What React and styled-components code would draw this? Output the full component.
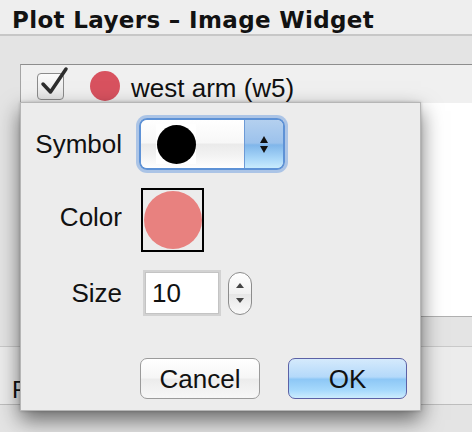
import React from 'react';
import styled, { createGlobalStyle } from 'styled-components';

const GlobalStyle = createGlobalStyle`
  html, body {
    margin: 0;
    padding: 0;
  }
  body {
    width: 472px;
    height: 432px;
    overflow: hidden;
    background: #e4e4e4;
    font-family: "Liberation Sans", Arial, sans-serif;
  }
`;

const Window = styled.div`
  position: relative;
  width: 472px;
  height: 432px;
  overflow: hidden;
  display: flex;
  flex-direction: column;
  background: #e4e4e4;
`;

const TitleBar = styled.div`
  height: 36px;
  box-sizing: border-box;
  padding: 6px 0 0 12px;
  border-bottom: 2px solid #c7c7c7;
  background: #eeeeee;
  font-family: "DejaVu Sans", Verdana, sans-serif;
  font-weight: bold;
  font-size: 23px;
  line-height: 28px;
  letter-spacing: 0.35px;
  color: #121212;
  white-space: nowrap;
`;

const Panel = styled.div`
  padding: 28px 0 29px 20px;
  border-bottom: 1px solid #c9c9c9;
  background: #e4e4e4;
`;

const ListBox = styled.div`
  height: 251px;
  border-top: 1px solid #8d8d8d;
  border-left: 1px solid #a5a5a5;
  border-bottom: 1px solid #b0b0b0;
  background: #ffffff;
`;

const LayerRow = styled.div`
  height: 38px;
  box-sizing: border-box;
  padding: 4px 0 0 16px;
  display: flex;
  align-items: center;
  background: #f0f0f0;
`;

const CheckBox = styled.div`
  position: relative;
  width: 27px;
  height: 27px;
  box-sizing: border-box;
  border: 1.5px solid #8b8b8b;
  border-radius: 4px;
  background: linear-gradient(#fbfbfb, #e4e4e4);

  svg {
    position: absolute;
    left: -1px;
    top: -8px;
    overflow: visible;
  }
`;

const Dot = styled.div`
  width: ${(p) => p.$size}px;
  height: ${(p) => p.$size}px;
  border-radius: 50%;
  background: ${(p) => p.$color};
  flex: none;
`;

const LayerName = styled.span`
  margin-left: 11px;
  padding-top: 3px;
  font-size: 26px;
  line-height: 30px;
  color: #111;
  white-space: nowrap;
`;

const LowerSection = styled.div`
  height: 58px;
  box-sizing: border-box;
  padding: 29px 0 0 12px;
  border-bottom: 1px solid #bdbdbd;
  background: #ececec;
  font-size: 24px;
  line-height: 28px;
  color: #111;
`;

const Dialog = styled.div`
  position: absolute;
  left: 20px;
  top: 102px;
  width: 401px;
  height: 309px;
  box-sizing: border-box;
  padding: 15px 0 0 0;
  border: 1px solid #b6b6b6;
  background: #ececec;
  box-shadow: 0 9px 20px rgba(0, 0, 0, 0.55), 0 0 3px rgba(0, 0, 0, 0.2);
  display: flex;
  flex-direction: column;
`;

const FieldRow = styled.div`
  display: flex;
  align-items: center;
  gap: 19px;
  margin-top: ${(p) => p.$top || 0}px;
`;

const Label = styled.span`
  width: 101px;
  text-align: right;
  font-size: 26px;
  line-height: 30px;
  color: #111;
  margin-bottom: ${(p) => p.$lift || 0}px;
`;

const Combo = styled.div`
  margin-left: -2px;
  width: 146px;
  height: 52px;
  box-sizing: border-box;
  border: 2px solid #5e92d6;
  border-radius: 8px;
  box-shadow: 0 0 0 3px rgba(118, 164, 226, 0.55);
  overflow: hidden;
  display: flex;
`;

const ComboField = styled.div`
  flex: 1;
  display: flex;
  align-items: center;
  padding-left: 15px;
  background: linear-gradient(#ffffff 0%, #f7f7f7 48%, #eaeaea 50%, #f3f3f3 75%, #ffffff 100%);
`;

const SymbolPreview = styled.div`
  width: 40px;
  height: 40px;
  display: flex;
  align-items: center;
  justify-content: center;
  background: #ffffff;
`;

const ComboArrows = styled.div`
  width: 38px;
  border-left: 1px solid #6c9ad6;
  display: flex;
  flex-direction: column;
  align-items: center;
  justify-content: center;
  gap: 3px;
  background: linear-gradient(#b4d0ef 0%, #9cc2ec 48%, #80b6ea 52%, #a8d6f8 80%, #c8ebfd 100%);
`;

const Arrow = styled.div`
  width: 0;
  height: 0;
  border-left: ${(p) => p.$w}px solid transparent;
  border-right: ${(p) => p.$w}px solid transparent;
  ${(p) => (p.$down ? 'border-top' : 'border-bottom')}: ${(p) => p.$h}px solid ${(p) => p.$color};
`;

const Swatch = styled.div`
  width: 63px;
  height: 64px;
  box-sizing: border-box;
  border: 2px solid #000;
  display: flex;
  align-items: center;
  justify-content: center;
  background: #ececec;
`;

const SizeInput = styled.div`
  margin-left: 2px;
  width: 78px;
  height: 46px;
  box-sizing: border-box;
  border: 3px solid #d2d2d2;
  outline: 1px solid #c4c4c4;
  outline-offset: -3px;
  padding-left: 6px;
  background: #fff;
  font-size: 26px;
  line-height: 40px;
  color: #111;
`;

const Stepper = styled.div`
  margin-left: -12px;
  width: 24px;
  height: 43px;
  box-sizing: border-box;
  border: 1.5px solid #8c8c8c;
  border-radius: 12px;
  background: linear-gradient(#ffffff, #f1f1f1 50%, #e6e6e6 51%, #fafafa);
  display: flex;
  flex-direction: column;
  align-items: center;
  justify-content: center;
  gap: 10px;
`;

const ButtonRow = styled.div`
  display: flex;
  gap: 28px;
  margin: 42px 0 0 119px;
`;

const Button = styled.div`
  width: ${(p) => p.$width}px;
  height: 41px;
  box-sizing: border-box;
  border: 1.5px solid ${(p) => (p.$primary ? '#5c61a6' : '#9b9b9b')};
  border-radius: 7px;
  display: flex;
  align-items: center;
  justify-content: center;
  font-size: 26px;
  line-height: 30px;
  color: #111;
  background: ${(p) =>
    p.$primary
      ? 'linear-gradient(#d5eafc 0%, #b4d9fa 46%, #8dc7f6 52%, #a6d9fc 80%, #ccecfd 100%)'
      : 'linear-gradient(#ffffff 0%, #f6f6f6 48%, #ececec 52%, #f7f7f7 100%)'};
`;

const App = () => {
  return (
    <>
      <GlobalStyle />
      <Window>
        <TitleBar>Plot Layers – Image Widget</TitleBar>
        <Panel>
          <ListBox>
            <LayerRow>
              <CheckBox>
                <svg width="30" height="30" viewBox="0 0 30 30">
                  <path
                    d="M6 18 L13.5 26 L29 3"
                    fill="none"
                    stroke="#2d2d2d"
                    strokeWidth="3.5"
                    strokeLinecap="round"
                    strokeLinejoin="round"
                  />
                </svg>
              </CheckBox>
              <Dot $size={30} $color="#d8525f" style={{ marginLeft: 26 }} />
              <LayerName>west arm (w5)</LayerName>
            </LayerRow>
          </ListBox>
        </Panel>
        <LowerSection>Frame</LowerSection>

        <Dialog>
          <FieldRow>
            <Label>Symbol</Label>
            <Combo>
              <ComboField>
                <SymbolPreview>
                  <Dot $size={39} $color="#000" />
                </SymbolPreview>
              </ComboField>
              <ComboArrows>
                <Arrow $w={4} $h={7} $color="#111" />
                <Arrow $w={4} $h={7} $color="#111" $down />
              </ComboArrows>
            </Combo>
          </FieldRow>

          <FieldRow $top={18}>
            <Label $lift={7}>Color</Label>
            <Swatch>
              <Dot $size={58} $color="#e8817f" />
            </Swatch>
          </FieldRow>

          <FieldRow $top={18}>
            <Label>Size</Label>
            <SizeInput>10</SizeInput>
            <Stepper>
              <Arrow $w={4} $h={5} $color="#444" />
              <Arrow $w={4} $h={5} $color="#444" $down />
            </Stepper>
          </FieldRow>

          <ButtonRow>
            <Button $width={120}>Cancel</Button>
            <Button $width={119} $primary>OK</Button>
          </ButtonRow>
        </Dialog>
      </Window>
    </>
  );
};

export default App;
